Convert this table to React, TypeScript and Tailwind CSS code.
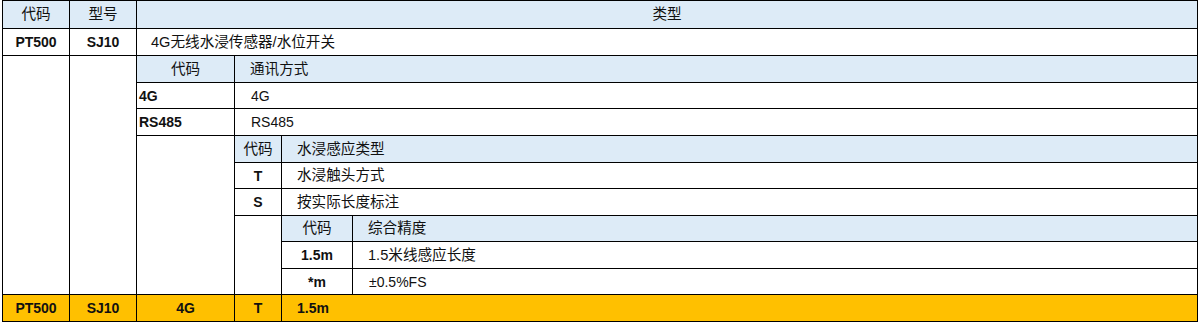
const font = { fontFamily: '"Liberation Sans", "Noto Sans CJK SC", sans-serif' };

const head = 'bg-[#ddebf7]';
const cell = 'border border-black p-0 align-middle';
// 中文字号略大
const zh = 'text-[14.6px]';

export default function App() {
    return (
        <div className="bg-white pl-[2px] text-[14px] leading-none text-[#111]" style={font}>
            <table className="table-fixed border-collapse" style={{ width: 1195 }}>
                <colgroup>
                    <col className="w-[67px]" />
                    <col className="w-[67px]" />
                    <col className="w-[98px]" />
                    <col className="w-[47px]" />
                    <col className="w-[71px]" />
                    <col className="w-[845px]" />
                </colgroup>
                <tbody>
                    {/* 表头 */}
                    <tr className="h-[28px]">
                        <td className={`${cell} ${head} ${zh} text-center`}>代码</td>
                        <td className={`${cell} ${head} ${zh} text-center`}>型号</td>
                        <td colSpan={4} className={`${cell} ${head} ${zh} text-center`}>
                            类型
                        </td>
                    </tr>
                    <tr className="h-[27px]">
                        <td className={`${cell} text-center font-bold`}>PT500</td>
                        <td className={`${cell} text-center font-bold`}>SJ10</td>
                        <td colSpan={4} className={`${cell} ${zh} pl-[14px]`}>
                            4G无线水浸传感器/水位开关
                        </td>
                    </tr>

                    {/* 通讯方式 */}
                    <tr className="h-[27px]">
                        <td rowSpan={9} className={cell} />
                        <td rowSpan={9} className={cell} />
                        <td className={`${cell} ${head} ${zh} text-center`}>代码</td>
                        <td colSpan={3} className={`${cell} ${head} ${zh} pl-[15px]`}>
                            通讯方式
                        </td>
                    </tr>
                    <tr className="h-[26px]">
                        <td className={`${cell} pl-[2px] font-bold`}>4G</td>
                        <td colSpan={3} className={`${cell} pl-[16px]`}>
                            4G
                        </td>
                    </tr>
                    <tr className="h-[27px]">
                        <td className={`${cell} pl-[2px] font-bold`}>RS485</td>
                        <td colSpan={3} className={`${cell} pl-[16px]`}>
                            RS485
                        </td>
                    </tr>

                    {/* 水浸感应类型 */}
                    <tr className="h-[27px]">
                        <td rowSpan={6} className={cell} />
                        <td className={`${cell} ${head} ${zh} text-center`}>代码</td>
                        <td colSpan={2} className={`${cell} ${head} ${zh} pl-[15px]`}>
                            水浸感应类型
                        </td>
                    </tr>
                    <tr className="h-[26px]">
                        <td className={`${cell} text-center font-bold`}>T</td>
                        <td colSpan={2} className={`${cell} ${zh} pl-[15px]`}>
                            水浸触头方式
                        </td>
                    </tr>
                    <tr className="h-[27px]">
                        <td className={`${cell} text-center font-bold`}>S</td>
                        <td colSpan={2} className={`${cell} ${zh} pl-[15px]`}>
                            按实际长度标注
                        </td>
                    </tr>

                    {/* 综合精度 */}
                    <tr className="h-[26px]">
                        <td rowSpan={3} className={cell} />
                        <td className={`${cell} ${head} ${zh} text-center`}>代码</td>
                        <td className={`${cell} ${head} ${zh} pl-[15px]`}>综合精度</td>
                    </tr>
                    <tr className="h-[27px]">
                        <td className={`${cell} text-center font-bold`}>1.5m</td>
                        <td className={`${cell} ${zh} pl-[15px]`}>1.5米线感应长度</td>
                    </tr>
                    <tr className="h-[26px]">
                        <td className={`${cell} text-center font-bold`}>*m</td>
                        <td className={`${cell} pl-[16px]`}>±0.5%FS</td>
                    </tr>

                    {/* 选型示例 */}
                    <tr className="h-[27px] bg-[#ffc000] font-bold">
                        <td className={`${cell} text-center`}>PT500</td>
                        <td className={`${cell} text-center`}>SJ10</td>
                        <td className={`${cell} text-center`}>4G</td>
                        <td className={`${cell} text-center`}>T</td>
                        <td colSpan={2} className={`${cell} pl-[15px]`}>
                            1.5m
                        </td>
                    </tr>
                </tbody>
            </table>
        </div>
    );
}
